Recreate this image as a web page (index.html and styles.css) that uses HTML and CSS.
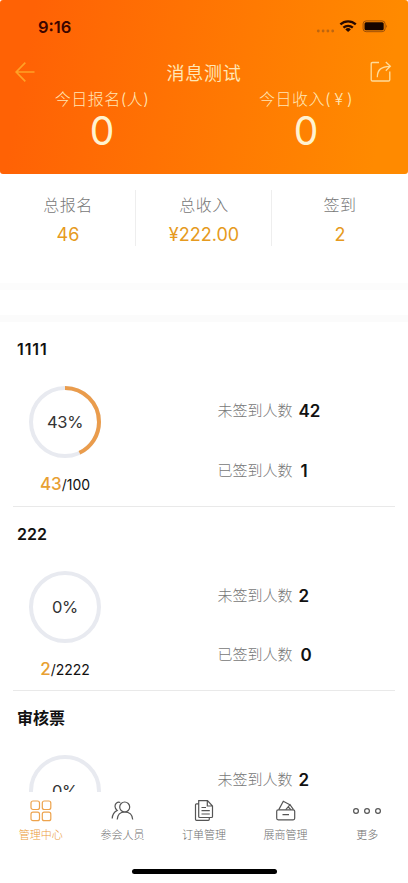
FILE: index.html
```html
<!DOCTYPE html>
<html lang="zh-CN">
<head>
<meta charset="utf-8">
<meta name="viewport" content="width=device-width, initial-scale=1">
<title>消息测试</title>
<link rel="stylesheet" href="styles.css">
</head>
<body>
<div class="app">
  <header class="hero">
    <div class="status">
      <span class="time">9:16</span>
      <svg class="status-icons" width="72" height="16" viewBox="0 0 72 16">
        <g fill="#bd6510"><circle cx="2.3" cy="12" r="1.4"/><circle cx="7.1" cy="12" r="1.4"/><circle cx="11.9" cy="12" r="1.4"/><circle cx="16.7" cy="12" r="1.4"/></g>
        <g fill="none" stroke="#260800" stroke-width="2.3"><path d="M24.400 5.400a11.3 11.3 0 0 1 15.400 0"/><path d="M27.400 8.700a7 7 0 0 1 9.400 0"/></g>
        <path d="M29.300 10.400a4 4 0 0 1 5.600 0L32.100 13z" fill="#260800"/>
        <rect x="47.100" y="1.900" width="22" height="10.800" rx="3" fill="none" stroke="#9e5008"/>
        <rect x="48.500" y="3.300" width="19.200" height="8" rx="1.500" fill="#160400"/>
        <path d="M70.400 5.500q1.300 1.700 0 3.400z" fill="#7d3c05"/>
      </svg>
    </div>
    <div class="titlebar">
      <svg width="20" height="20" viewBox="0 0 20 20" fill="none" stroke="#ffa126" stroke-width="1.700"><path d="M10.300.700 1.200 10l9.100 9.300M1.200 10H19.500"/></svg>
      <h1>消息测试</h1>
      <svg width="22" height="22" viewBox="0 0 22 22" fill="none" stroke="#ffdc9a" stroke-width="1.300"><path d="M9 1.500H2.500Q1.200 1.500 1.200 2.800V18.700Q1.200 20 2.500 20H18.500Q19.800 20 19.800 18.700V10.500M7.300 16.200C7.300 9 11 5.300 20 5.300M15.800 1 20.300 5.300 15.800 9.700"/></svg>
    </div>
    <div class="today">
      <div><div class="today-label">今日报名(人)</div><div class="today-value">0</div></div>
      <div><div class="today-label">今日收入(<span class="yen">¥</span>)</div><div class="today-value">0</div></div>
    </div>
  </header>

  <section class="totals">
    <div class="total"><span class="total-label">总报名</span><span class="total-value">46</span></div>
    <div class="total"><span class="total-label">总收入</span><span class="total-value">¥222.00</span></div>
    <div class="total"><span class="total-label">签到</span><span class="total-value">2</span></div>
  </section>
  <div class="gap"></div>

  <main class="tickets">
    <article class="ticket">
      <h2 class="ones">1111</h2>
      <div class="ticket-body">
        <div class="progress">
          <svg width="72" height="72" viewBox="0 0 72 72"><circle class="track" cx="36" cy="36" r="34"/><circle class="bar" cx="36" cy="36" r="34" pathLength="100" stroke-dasharray="43 100" transform="rotate(-90 36 36)"/><text x="36" y="42">43%</text></svg>
          <p class="count"><b>43</b>/100</p>
        </div>
        <dl><div><dt>未签到人数</dt><dd>42</dd></div><div><dt>已签到人数</dt><dd class="shift">1</dd></div></dl>
      </div>
    </article>
    <article class="ticket">
      <h2>222</h2>
      <div class="ticket-body">
        <div class="progress">
          <svg width="72" height="72" viewBox="0 0 72 72"><circle class="track" cx="36" cy="36" r="34"/><text x="36" y="42">0%</text></svg>
          <p class="count"><b>2</b>/2222</p>
        </div>
        <dl><div><dt>未签到人数</dt><dd>2</dd></div><div><dt>已签到人数</dt><dd class="shift">0</dd></div></dl>
      </div>
    </article>
    <article class="ticket">
      <h2>审核票</h2>
      <div class="ticket-body">
        <div class="progress">
          <svg width="72" height="72" viewBox="0 0 72 72"><circle class="track" cx="36" cy="36" r="34"/><text x="36" y="42">0%</text></svg>
        </div>
        <dl><div><dt>未签到人数</dt><dd>2</dd></div></dl>
      </div>
    </article>
  </main>

  <nav class="tabs">
    <a class="tab active"><svg width="24" height="24" viewBox="0 0 24 24"><rect x="2" y="2" width="8.500" height="8.500" rx="2"/><rect x="13.300" y="2" width="8.500" height="8.500" rx="2"/><rect x="2" y="13.200" width="8.500" height="8.500" rx="2"/><rect x="13.300" y="13.200" width="8.500" height="8.500" rx="2"/></svg><span>管理中心</span></a>
    <a class="tab"><svg width="24" height="24" viewBox="0 0 24 24"><circle cx="14.700" cy="8" r="5"/><path d="M7.200 20.500C7.500 15.800 10.200 13 14.700 13s7.700 2.800 8 7.500M10.300 3.500C7.400 2.500 5 4.500 5 7.200c0 1.800.800 3.200 2.200 4.200C4.300 12.900 2.400 15.500 2.200 19.500"/></svg><span>参会人员</span></a>
    <a class="tab"><svg width="24" height="24" viewBox="0 0 24 24"><path d="M6.700 1.700H15.500L20.500 7V17.500Q20.500 18.500 19.500 18.500H7.700Q6.700 18.500 6.700 17.500zM15.300 1.900V7h5M6.700 4.800H4.500Q3.500 4.800 3.500 5.800V20.300Q3.500 21.300 4.500 21.300H16.300Q17.300 21.300 17.300 20.300V18.500M9.500 8.500H14M9.500 11.700H17.800M9.500 15H17.800"/></svg><span>订单管理</span></a>
    <a class="tab"><svg width="24" height="24" viewBox="0 0 24 24"><rect x="2.700" y="10.800" width="18" height="10" rx="1.500"/><path d="M8.500 15.700H15M4.800 10.600 9.300 2.300 16.800 6.200M11.800 10.600 16 5.700 19.500 10.600M14.300 8 16.800 10.600"/></svg><span>展商管理</span></a>
    <a class="tab"><svg width="30" height="24" viewBox="0 0 30 24"><circle cx="4" cy="12" r="2.400"/><circle cx="15" cy="12" r="2.400"/><circle cx="26" cy="12" r="2.400"/></svg><span>更多</span></a>
  </nav>
  <div class="home"></div>
</div>
</body>
</html>
```
FILE: styles.css
```css
* { box-sizing: border-box; margin: 0; padding: 0; }
body {
  background: #fff;
  color: #111;
  font-family: Inter, "Noto Sans CJK SC", sans-serif;
}
svg { display: block; flex: none; }
.app {
  display: flex;
  flex-direction: column;
  height: 883px;
  overflow: hidden;
}

.hero {
  flex: none;
  height: 174px;
  border-radius: 3px;
  background: linear-gradient(100deg, #ff6205 8%, #ff8a00 92%);
  color: #ffe6b5;
}
.status {
  display: flex;
  align-items: center;
  justify-content: space-between;
  height: 53px;
  padding: 0 20px 0 38px;
}
.time { color: #3b0500; font-size: 16.500px; font-weight: 600; line-height: 20px; }
.titlebar {
  display: flex;
  align-items: center;
  justify-content: space-between;
  height: 37px;
  padding: 0 16px 0 15px;
}
.titlebar h1 { padding-left: 3px; font-size: 18px; font-weight: 400; letter-spacing: .7px; }
.today { display: grid; grid-template-columns: 1fr 1fr; text-align: center; }
.today-label { height: 17px; line-height: 18px; font-size: 16px; letter-spacing: .5px; font-weight: 300; }
.yen { display: inline-block; width: 16px; }
.today-value { height: 48px; line-height: 48px; font-size: 39px; color: #fff3d0; }

.totals {
  flex: none;
  display: grid;
  grid-template-columns: repeat(3, 1fr);
  height: 109px;
  padding-top: 16px;
}
.total {
  display: flex;
  flex-direction: column;
  align-items: center;
  height: 56px;
  padding-left: 1px;
  border-right: 1px solid #eee;
}
.total:last-child { border-right: 0; padding-left: 0; }
.total-label { height: 30px; line-height: 31px; font-size: 16px; font-weight: 300; letter-spacing: .5px; color: #777; }
.total-value { line-height: 30px; font-size: 18px; color: #e69a20; }
.gap {
  flex: none;
  height: 39px;
  border-top: 7px solid #fcfcfc;
  border-bottom: 7px solid #fbfbfb;
}

.tickets { flex: none; height: 470px; overflow: hidden; }
.ticket {
  height: 184.700px;
  margin: 0 13px;
  padding: 0 4px;
  border-bottom: 1px solid #e9e9e9;
}
.ticket h2 { height: 64px; padding-top: 15px; font-size: 16px; line-height: 25px; font-weight: 600; }
.ticket h2.ones { letter-spacing: .9px; }
.ticket-body { display: grid; grid-template-columns: 200.500px 1fr; }
.progress { width: 96px; display: flex; flex-direction: column; align-items: center; }
.track { fill: none; stroke: #e8eaf0; stroke-width: 4; }
.bar { fill: none; stroke: #ea9c4c; stroke-width: 4; }
.progress text { font-size: 16.500px; letter-spacing: -.3px; fill: #333; text-anchor: middle; }
.count { margin-top: 14px; line-height: 24px; font-size: 14px; white-space: nowrap; }
.count b { font-size: 17px; font-weight: 500; color: #e8a032; }
.ticket dl { padding-top: 13px; }
.ticket dl div { display: flex; align-items: center; height: 24px; margin-bottom: 35.500px; }
.ticket dt { width: 81px; line-height: 22px; font-size: 15px; font-weight: 300; color: #777; }
.ticket dd { font-size: 17px; font-weight: 600; }
.ticket dd.shift { padding-left: 2px; }

.tabs { flex: none; display: grid; grid-template-columns: repeat(5, 1fr); height: 77px; padding-top: 7px; }
.tab { display: flex; flex-direction: column; align-items: center; color: #707070; font-size: 11px; }
.tab svg { fill: none; stroke: #555; stroke-width: 1.200; }
.tab span { height: 24px; line-height: 25px; font-weight: 300; }
.tab.active { color: #eb9b3b; }
.tab.active svg { stroke: #eda34d; }
.home { flex: none; align-self: center; width: 145px; height: 5px; border-radius: 3px; background: #000; }
```
